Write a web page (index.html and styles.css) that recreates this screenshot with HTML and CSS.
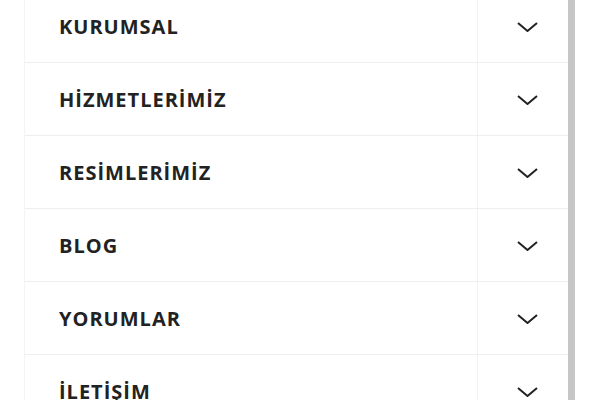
FILE: index.html
```html
<!DOCTYPE html>
<html lang="tr">
<head>
<meta charset="utf-8">
<link rel="stylesheet" href="styles.css">
</head>
<body>
<div class="page">
  <nav class="menu">
    <div class="row"><span class="label">KURUMSAL</span><span class="toggle"><svg viewBox="0 0 21 10" width="21" height="10"><path d="M1 1 L10.5 9 L20 1" fill="none" stroke="#222" stroke-width="2"/></svg></span></div>
    <div class="row"><span class="label">HİZMETLERİMİZ</span><span class="toggle"><svg viewBox="0 0 21 10" width="21" height="10"><path d="M1 1 L10.5 9 L20 1" fill="none" stroke="#222" stroke-width="2"/></svg></span></div>
    <div class="row"><span class="label">RESİMLERİMİZ</span><span class="toggle"><svg viewBox="0 0 21 10" width="21" height="10"><path d="M1 1 L10.5 9 L20 1" fill="none" stroke="#222" stroke-width="2"/></svg></span></div>
    <div class="row"><span class="label">BLOG</span><span class="toggle"><svg viewBox="0 0 21 10" width="21" height="10"><path d="M1 1 L10.5 9 L20 1" fill="none" stroke="#222" stroke-width="2"/></svg></span></div>
    <div class="row"><span class="label">YORUMLAR</span><span class="toggle"><svg viewBox="0 0 21 10" width="21" height="10"><path d="M1 1 L10.5 9 L20 1" fill="none" stroke="#222" stroke-width="2"/></svg></span></div>
    <div class="row"><span class="label">İLETİŞİM</span><span class="toggle"><svg viewBox="0 0 21 10" width="21" height="10"><path d="M1 1 L10.5 9 L20 1" fill="none" stroke="#222" stroke-width="2"/></svg></span></div>
  </nav>
  <div class="scrollbar"></div>
</div>
</body>
</html>
```
FILE: styles.css
```css
html, body {
  margin: 0;
  padding: 0;
  background: #fff;
  height: 100%;
  overflow: hidden;
}
.page {
  display: flex;
  height: 400px;
  padding-left: 24px;
}
.menu {
  width: 543px;
  border-left: 1px solid #f4f4f4;
  margin-top: -10px;
  font-family: "Open Sans", sans-serif;
}
.row {
  display: flex;
  height: 72px;
  border-bottom: 1px solid #eeeeee;
}
.label {
  flex: 1;
  display: flex;
  align-items: center;
  padding-left: 34px;
  padding-top: 1px;
  font-size: 20px;
  font-weight: 700;
  letter-spacing: 1px;
  color: #222;
}
.toggle {
  width: 91px;
  border-left: 1px solid #f2f2f2;
  display: flex;
  align-items: center;
  justify-content: center;
  padding-left: 8px;
  padding-top: 1px;
  box-sizing: border-box;
}
.scrollbar {
  width: 7px;
  background: #c6c6c6;
}
```
